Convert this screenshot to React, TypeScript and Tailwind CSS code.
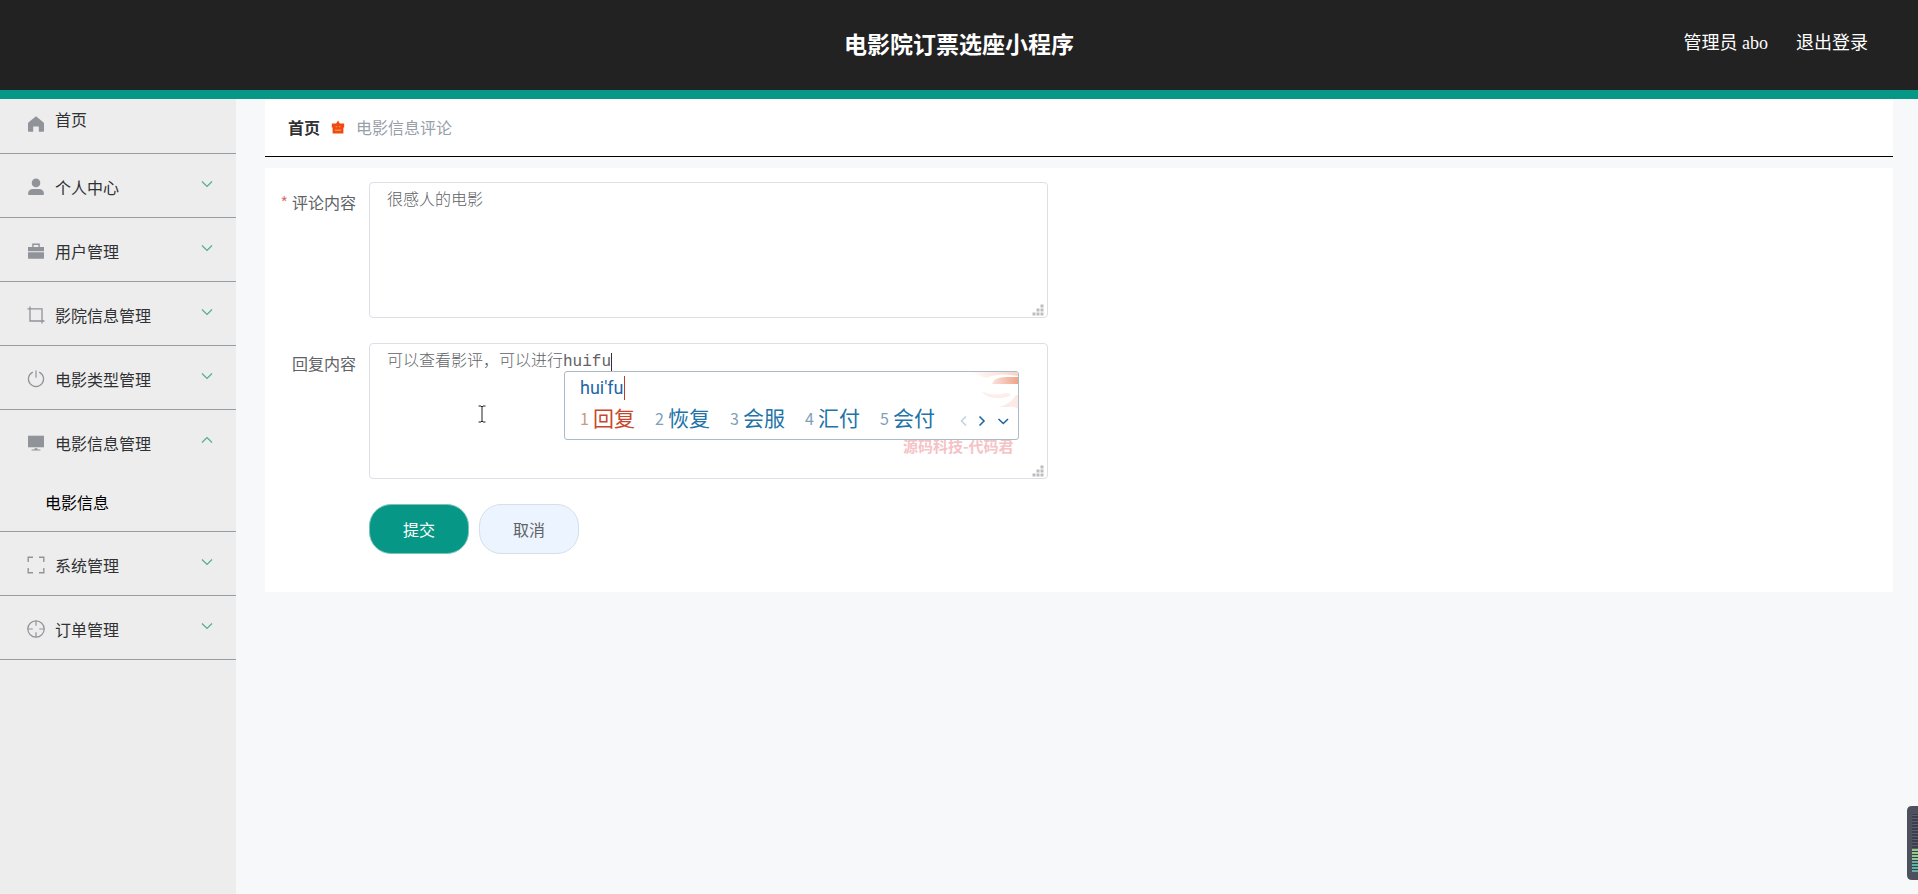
import React from 'react';

type IconName = 'home' | 'user' | 'case' | 'crop' | 'power' | 'monitor' | 'frame' | 'aim';

interface MenuItem {
  label: string;
  icon: IconName;
  children?: string[];
  open?: boolean;
}

const MENU: MenuItem[] = [
  { label: '个人中心', icon: 'user' },
  { label: '用户管理', icon: 'case' },
  { label: '影院信息管理', icon: 'crop' },
  { label: '电影类型管理', icon: 'power' },
  { label: '电影信息管理', icon: 'monitor', open: true, children: ['电影信息'] },
  { label: '系统管理', icon: 'frame' },
  { label: '订单管理', icon: 'aim' },
];

const CANDIDATES = ['回复', '恢复', '会服', '汇付', '会付'];

const ICONS: Record<IconName, React.ReactNode> = {
  home: <path fill="currentColor" d="M9 1.2 16.6 7.6q.4.4.4.9V16q0 .8-.8.8h-4.4v-5.2H6.2v5.2H1.8Q1 16.8 1 16V8.5q0-.5.4-.9z" />,
  user: (
    <g fill="currentColor">
      <circle cx="9" cy="4.9" r="4.3" />
      <path d="M1 15.5Q1.5 11 6 11h6q4.5 0 5 4.5 0 1.5-1.200 1.5H2.2Q1 17 1 15.5z" />
    </g>
  ),
  case: (
    <g fill="currentColor">
      <path d="M5.2 1.5h7.6v3.4H17v4.3H1V4.900h4.200zM6.600 2.900v2h4.800v-2z" fillRule="evenodd" />
      <path d="M1 10.200h16V16q0 .7-.7.7H1.700Q1 16.700 1 16z" />
    </g>
  ),
  crop: (
    <g fill="none" stroke="currentColor" strokeWidth="1.3">
      <path d="M3 .5V15h14.500" />
      <path d="M.5 2.800H15V17.500" />
    </g>
  ),
  power: (
    <g fill="none" stroke="currentColor" strokeWidth="1.2">
      <path d="M9 .6v7.200" />
      <path d="M5.800 2.100a7.600 7.600 0 1 0 6.400 0" />
    </g>
  ),
  monitor: (
    <g fill="currentColor">
      <path d="M1 1.700h16v11.600H1z" />
      <path d="M7.600 14.200h2.800v1.200h3v1H4.600v-1h3z" />
    </g>
  ),
  frame: (
    <path
      fill="none"
      stroke="currentColor"
      strokeWidth="1.4"
      d="M1.200 6V1.200H6M12 1.200h4.800V6M16.800 12v4.800H12M6 16.800H1.200V12"
    />
  ),
  aim: (
    <g fill="none" stroke="currentColor" strokeWidth="1.2">
      <circle cx="9" cy="9" r="8.2" />
      <path d="M9 .8v5M9 12.200v5M.8 9h5M12.200 9h5" />
    </g>
  ),
};

function MenuIcon({ name }: { name: IconName }) {
  return (
    <svg viewBox="0 0 18 18" className="h-[18px] w-[18px] shrink-0 text-[#909399]" aria-hidden="true">
      {ICONS[name]}
    </svg>
  );
}

function Arrow({ up }: { up?: boolean }) {
  return (
    <svg viewBox="0 0 12 8" className="h-2 w-3 text-[#4fae96]" fill="none" stroke="currentColor" aria-hidden="true">
      <path d={up ? 'M1 6.500 6 1.500l5 5' : 'M1 1.500l5 5 5-5'} strokeWidth="1.2" />
    </svg>
  );
}

function Grip() {
  return (
    <svg viewBox="0 0 12 12" className="pointer-events-none absolute right-1 bottom-0.5 h-3 w-3" fill="#bdbdbd" aria-hidden="true">
      <path d="M8.500.5h3v3h-3zM4.500 4.500h3v3h-3zM8.500 4.500h3v3h-3zM.5 8.500h3v3h-3zM4.500 8.500h3v3h-3zM8.500 8.500h3v3h-3z" />
    </svg>
  );
}

function Header() {
  return (
    <header className="grid h-[99px] grid-cols-[1fr_auto_1fr] items-center border-b-9 border-[#079786] bg-[#222] px-[50px] pb-1 text-white">
      <span />
      <h1 className="text-[23px] font-bold">电影院订票选座小程序</h1>
      <div className="flex justify-end gap-7 font-['Liberation_Serif','Noto_Sans_CJK_SC',serif] text-lg">
        <span>管理员 abo</span>
        <button type="button">退出登录</button>
      </div>
    </header>
  );
}

function Sidebar() {
  return (
    <nav className="w-[236px] shrink-0 bg-[#ededed] text-[#303133]">
      <a href="#home" className="flex h-[55px] items-start gap-2.5 border-b border-[#999d9f] pt-2 pl-[27px]">
        <span className="pt-2">
          <MenuIcon name="home" />
        </span>
        <span>首页</span>
      </a>
      {MENU.map((item) => (
        <div key={item.label} className="border-b border-[#999d9f]">
          <button type="button" className="flex h-[63px] w-full items-center gap-2.5 pt-0.5 pr-[23px] pl-[27px]">
            <MenuIcon name={item.icon} />
            <span className="flex-1 text-left">{item.label}</span>
            <span className="pb-1.5">
              <Arrow up={item.open} />
            </span>
          </button>
          {item.children?.map((child) => (
            <a key={child} href="#movie" className="flex h-[58px] items-center pl-[45px] text-black">
              {child}
            </a>
          ))}
        </div>
      ))}
    </nav>
  );
}

function Breadcrumb() {
  return (
    <div className="flex h-[58px] items-center border-b border-black bg-white px-[23px] pb-0.5">
      <a href="#home" className="font-bold text-[#303133]">首页</a>
      <svg viewBox="0 0 14 14" className="mx-[11px] h-3.5 w-3.5" aria-hidden="true">
        <path fill="#ef4a12" d="M5.200 3.500 7 .5l1.800 3h4.400v4h-.8V13q0 .5-.5.5H2.100q-.5 0-.5-.5V7.500H.8v-4z" />
        <path fill="#ff8a45" d="M4 9.500h6v1.600H4zM4.600 6h1.600v1.200H4.600zM7.800 6h1.600v1.200H7.800z" />
      </svg>
      <span className="text-[#979fab]">电影信息评论</span>
    </div>
  );
}

// Pinyin candidate window of the input method
function ImePanel() {
  return (
    <div className="absolute top-7 left-[195px] h-[69px] w-[455px] overflow-hidden rounded-[3px] border border-[#a9bac9] bg-white px-[15px] text-[#2273a8]">
      <svg viewBox="0 0 50 40" className="absolute top-0 right-0 h-10 w-[50px]" fill="none" aria-hidden="true">
        <defs>
          <linearGradient id="skin" x1="0" y1="0" x2="1" y2="0">
            <stop offset="0" stopColor="#fff" />
            <stop offset="1" stopColor="#f6d3c7" />
          </linearGradient>
          <linearGradient id="band" x1="0" y1="0" x2="1" y2="0">
            <stop offset="0" stopColor="#fbe3da" />
            <stop offset="1" stopColor="#efa48b" />
          </linearGradient>
        </defs>
        <path d="M2 0h48v4Q30 0 18 6 10 4 2 0z" fill="url(#skin)" />
        <path d="M24 12Q26 5 38 5h12v7z" fill="url(#band)" />
        <path d="M14 19q10 6 24 2 6 0 4 3-10 4-20 1-6-2-8-6z" fill="#fcefeb" />
        <path d="M30 35q12-2 18-12l2 0v14q-4-3-8-2z" fill="#fcebe5" />
      </svg>
      <div className="flex h-8 items-center font-['Roboto','Noto_Sans_CJK_SC',sans-serif] text-lg">
        <span className="border-r border-[#c0392b] leading-6 text-[#2166a8]">hui'fu</span>
      </div>
      <div className="flex h-7 items-center">
        {CANDIDATES.map((word, i) => (
          <span
            key={word}
            className={`flex w-[75px] shrink-0 items-center gap-1 text-[21px] whitespace-nowrap ${i === 0 ? 'text-[#c8472c]' : ''}`}
          >
            <span className={`text-base ${i === 0 ? 'text-[#c79a86]' : 'text-[#7f9fb8]'}`}>{i + 1}</span>
            {word}
          </span>
        ))}
        <svg viewBox="0 0 50 12" className="mt-1.5 ml-1 h-3 w-[50px] shrink-0" fill="none" strokeWidth="1.6" aria-hidden="true">
          <path d="M7 1.500 2.500 6 7 10.500" stroke="#c5d3df" />
          <path d="M20.500 1.500 25 6l-4.500 4.500M39.500 4l4.800 4.500L49 4" stroke="#1f659c" />
        </svg>
      </div>
    </div>
  );
}

const AREA =
  "block h-[136px] w-full resize-none rounded border border-[#dcdfe6] bg-white px-[17px] py-1.5 font-['Liberation_Mono','Noto_Sans_CJK_SC',monospace] text-base font-light text-[#606266] outline-none";

function CommentForm() {
  return (
    <form className="mt-[11px] flex flex-col gap-[25px] bg-white pt-3.5 pb-[38px]">
      <div className="flex">
        <label htmlFor="comment" className="w-[104px] shrink-0 pt-2 pr-[13px] text-right text-[#606266]">
          <span className="mr-1 text-[#e0706c]">*</span>
          评论内容
        </label>
        <div className="relative w-[679px]">
          <textarea id="comment" className={AREA} defaultValue="很感人的电影" />
          <Grip />
        </div>
      </div>
      <div className="flex">
        <label htmlFor="reply" className="w-[104px] shrink-0 pt-2 pr-[13px] text-right text-[#606266]">
          回复内容
        </label>
        <div className="relative w-[679px]">
          <textarea id="reply" className={AREA} defaultValue="可以查看影评，可以进行huifu" />
          <Grip />
          {/* text caret */}
          <span className="absolute top-2.5 left-[242px] h-[18px] w-px bg-[#333]" />
          {/* mouse pointer */}
          <svg viewBox="0 0 8 18" className="absolute top-[62px] left-[109px] h-[18px] w-2" fill="none" stroke="#222" aria-hidden="true">
            <path d="M.5 1h2.500l1 1 1-1h2.500M4 2v14M.5 17h2.500l1-1 1 1h2.500" />
          </svg>
          <span className="absolute top-[92px] left-[534px] text-[15px] font-bold whitespace-nowrap text-[#f5c3c6]">
            源码科技-代码君
          </span>
          <ImePanel />
        </div>
      </div>
      <div className="flex gap-2.5 pl-[104px]">
        <button type="button" className="h-[50px] w-[100px] rounded-[22px] border border-[#7cc4bb] bg-[#079786] text-white">
          提交
        </button>
        <button type="button" className="h-[50px] w-[100px] rounded-[22px] border border-[#d5dfe8] bg-[#ecf5ff] text-[#606266]">
          取消
        </button>
      </div>
    </form>
  );
}

function LevelMeter() {
  return (
    <svg viewBox="0 0 11 74" className="fixed right-0 bottom-3.5 h-[74px] w-[11px]" aria-hidden="true">
      <path d="M11 0H5Q0 0 0 5v64q0 5 5 5h6z" fill="#4d515d" />
      <path d="M5 8h6v58H5z" fill="#3b3f4b" />
      <path d="M8 9v34" stroke="#5c606c" strokeWidth="6" strokeDasharray="1 2" />
      <path d="M8 43v12" stroke="#93c98a" strokeWidth="6" strokeDasharray="2 1" />
      <path d="M8 55v11" stroke="#5fb3a4" strokeWidth="6" strokeDasharray="2 1" />
    </svg>
  );
}

export default function App() {
  return (
    <div className="flex min-h-screen flex-col bg-[#f6f8fa] font-['Noto_Sans_CJK_SC',sans-serif] text-base">
      <Header />
      <div className="flex flex-1">
        <Sidebar />
        <main className="min-w-0 flex-1 pr-[25px] pl-[29px]">
          <Breadcrumb />
          <CommentForm />
        </main>
      </div>
      <LevelMeter />
    </div>
  );
}
